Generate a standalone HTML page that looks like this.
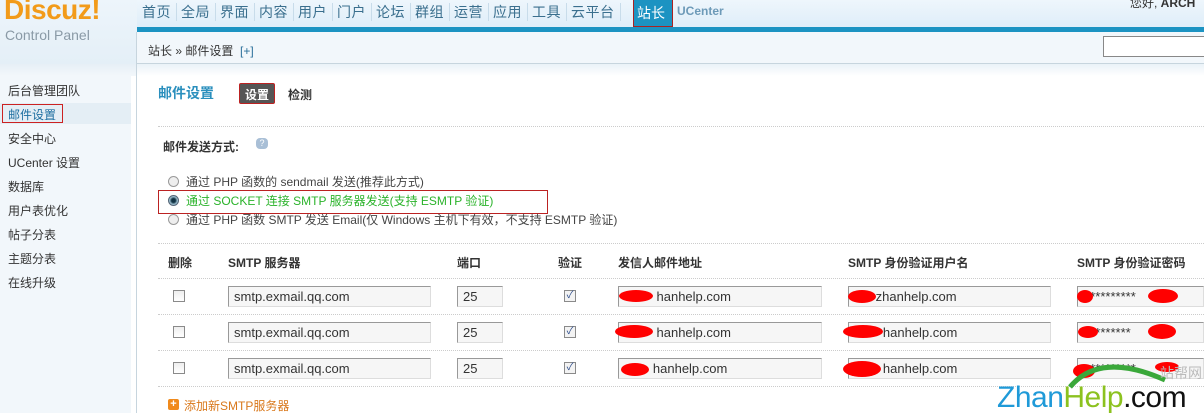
<!DOCTYPE html>
<html><head><meta charset="utf-8"><style>
*{margin:0;padding:0;box-sizing:border-box}
body{width:1204px;height:413px;overflow:hidden;position:relative;background:#fff;font-family:"Liberation Sans","Noto Sans CJK SC",sans-serif;font-size:12px;color:#333}
.a{position:absolute;white-space:nowrap}
.top{left:0;top:0;width:1204px;height:32px;background:linear-gradient(#eef6fc,#dcecf8)}
.bar{left:137px;top:27px;width:1067px;height:5px;background:#1c93c2}
.nav{top:3px;font-size:14px;color:#3a6f8e}
.nav span{display:inline-block;padding:0 5px 0 4px;border-right:1px solid #c8dcea;line-height:18px;letter-spacing:0.5px}
.crumb{left:137px;top:32px;width:1067px;height:32px;background:#f2f7fb;border-bottom:1px solid #c7d5de}
.side{left:0;top:0;width:131px;height:413px;background:#f2f7fb}
.vl{left:136px;top:32px;width:1px;height:381px;background:#c7d5de}
.si{left:8px;font-size:12px;color:#333}
.inp{position:absolute;height:21px;border:1px solid #999;border-right-color:#ddd;border-bottom-color:#ddd;background:#f6f6f6;font-size:13px;padding:2px 5px;color:#333;white-space:nowrap;overflow:hidden}
.cb{position:absolute;width:12px;height:12px;border:1px solid #8a8a8a;background:linear-gradient(#eee,#fff)}
.ck{position:absolute;width:12px;height:12px;border:1px solid #8a8a8a;background:#f3f3f3;font-size:10px;line-height:10px;text-align:center;color:#2a4a8a}
.dot{position:absolute;left:158px;width:1046px;border-top:1px dotted #ccc}
.th{top:254px;font-weight:bold;font-size:12px;color:#333}
.red{position:absolute;background:#f00;border-radius:50%}
</style></head><body>
<div class="a top"></div>
<div class="a side"></div>
<div class="a" style="left:0;top:0;width:137px;height:64px;background:linear-gradient(#edf5fb,#e4eff7)"></div>
<div class="a" style="left:4px;top:-6px;font-size:28px;font-weight:bold;color:#f29b1a;letter-spacing:-0.5px">Discuz!</div>
<div class="a" style="left:5px;top:27px;font-size:14px;color:#8a9aa6">Control Panel</div>
<div class="a nav" style="left:138px"><span>首页</span><span>全局</span><span>界面</span><span>内容</span><span>用户</span><span>门户</span><span>论坛</span><span>群组</span><span>运营</span><span>应用</span><span>工具</span><span>云平台</span></div>
<div class="a" style="left:633px;top:0;width:40px;height:27px;background:#1c93c2;border:1px solid #a22;border-top:none"></div>
<div class="a" style="left:637px;top:3px;font-size:14px;color:#fff">站长</div>
<div class="a" style="left:677px;top:4px;font-size:12px;font-weight:bold;color:#6d9ab8">UCenter</div>
<div class="a" style="left:1130px;top:-6px;font-size:12px;color:#333">您好, <b>ARCH</b></div>
<div class="a bar"></div>
<div class="a crumb"></div>
<div class="a" style="left:148px;top:42px;font-size:12px;color:#333">站长 » 邮件设置 &nbsp;<span style="color:#2a6f9a">[+]</span></div>
<div class="a" style="left:1103px;top:36px;width:102px;height:21px;border:1px solid #888;background:#fff"></div>
<div class="a vl"></div>
<div class="a" style="left:0;top:64px;width:136px;height:12px;background:linear-gradient(#e6eff6,#f2f7fb)"></div>
<div class="a" style="left:137px;top:64px;width:1067px;height:12px;background:linear-gradient(#eaf2f8,#fff)"></div>
<div class="a si" style="top:82px">后台管理团队</div>
<div class="a" style="left:0;top:103px;width:131px;height:21px;background:#e4eef5"></div>
<div class="a" style="left:2px;top:104px;width:61px;height:19px;border:1px solid #c22"></div>
<div class="a si" style="top:106px;color:#1c6ea0">邮件设置</div>
<div class="a si" style="top:130px">安全中心</div>
<div class="a si" style="top:154px">UCenter 设置</div>
<div class="a si" style="top:178px">数据库</div>
<div class="a si" style="top:202px">用户表优化</div>
<div class="a si" style="top:226px">帖子分表</div>
<div class="a si" style="top:250px">主题分表</div>
<div class="a si" style="top:274px">在线升级</div>

<div class="a" style="left:158px;top:83px;font-size:14px;font-weight:bold;color:#2a8fbd">邮件设置</div>
<div class="a" style="left:239px;top:83px;width:36px;height:21px;background:#555;border:1px solid #b22;border-radius:2px"></div>
<div class="a" style="left:245px;top:86px;font-weight:bold;color:#fff">设置</div>
<div class="a" style="left:288px;top:86px;font-weight:bold;color:#333">检测</div>
<div class="dot" style="top:126px"></div>
<div class="a" style="left:163px;top:138px;font-weight:bold">邮件发送方式:</div>
<div class="a" style="left:256px;top:138px;width:12px;height:11px;border-radius:4px;background:#a9bfd6;color:#fff;font-size:9px;text-align:center;line-height:11px">?</div>
<div class="a" style="left:168px;top:176px;width:11px;height:11px;border-radius:50%;border:1px solid #999;background:#eee"></div>
<div class="a" style="left:186px;top:173px;color:#444">通过 PHP 函数的 sendmail 发送(推荐此方式)</div>
<div class="a" style="left:158px;top:190px;width:390px;height:24px;border:1px solid #b22"></div>
<div class="a" style="left:168px;top:195px;width:11px;height:11px;border-radius:50%;border:1px solid #567;background:radial-gradient(#134 30%,#9bc 60%)"></div>
<div class="a" style="left:186px;top:192px;color:#2bb32b">通过 SOCKET 连接 SMTP 服务器发送(支持 ESMTP 验证)</div>
<div class="a" style="left:168px;top:214px;width:11px;height:11px;border-radius:50%;border:1px solid #999;background:#eee"></div>
<div class="a" style="left:186px;top:211px;color:#444">通过 PHP 函数 SMTP 发送 Email(仅 Windows 主机下有效，不支持 ESMTP 验证)</div>
<div class="dot" style="top:243px"></div>
<div class="a th" style="left:168px">删除</div>
<div class="a th" style="left:228px">SMTP 服务器</div>
<div class="a th" style="left:457px">端口</div>
<div class="a th" style="left:558px">验证</div>
<div class="a th" style="left:618px">发信人邮件地址</div>
<div class="a th" style="left:848px">SMTP 身份验证用户名</div>
<div class="a th" style="left:1077px">SMTP 身份验证密码</div>
<div class="dot" style="top:278px"></div>
<div class="dot" style="top:314px"></div>
<div class="dot" style="top:350px"></div>
<div class="dot" style="top:386px"></div>

<div class="cb" style="left:173px;top:290px"></div>
<div class="inp" style="left:228px;top:286px;width:203px">smtp.exmail.qq.com</div>
<div class="inp" style="left:457px;top:286px;width:46px">25</div>
<div class="ck" style="left:564px;top:290px">✓</div>
<div class="inp" style="left:618px;top:286px;width:204px">&nbsp;&nbsp;&nbsp;&nbsp;&nbsp;&nbsp;&nbsp;&nbsp;&nbsp;hanhelp.com</div>
<div class="inp" style="left:848px;top:286px;width:203px">&nbsp;&nbsp;&nbsp;&nbsp;&nbsp;&nbsp;zhanhelp.com</div>
<div class="inp" style="left:1077px;top:286px;width:127px">&nbsp;&nbsp;*********</div>

<div class="cb" style="left:173px;top:326px"></div>
<div class="inp" style="left:228px;top:322px;width:203px">smtp.exmail.qq.com</div>
<div class="inp" style="left:457px;top:322px;width:46px">25</div>
<div class="ck" style="left:564px;top:326px">✓</div>
<div class="inp" style="left:618px;top:322px;width:204px">&nbsp;&nbsp;&nbsp;&nbsp;&nbsp;&nbsp;&nbsp;&nbsp;&nbsp;hanhelp.com</div>
<div class="inp" style="left:848px;top:322px;width:203px">&nbsp;&nbsp;&nbsp;&nbsp;&nbsp;&nbsp;&nbsp;&nbsp;hanhelp.com</div>
<div class="inp" style="left:1077px;top:322px;width:127px">&nbsp;&nbsp;********</div>

<div class="cb" style="left:173px;top:362px"></div>
<div class="inp" style="left:228px;top:358px;width:203px">smtp.exmail.qq.com</div>
<div class="inp" style="left:457px;top:358px;width:46px">25</div>
<div class="ck" style="left:564px;top:362px">✓</div>
<div class="inp" style="left:618px;top:358px;width:204px">&nbsp;&nbsp;&nbsp;&nbsp;&nbsp;&nbsp;&nbsp;&nbsp;hanhelp.com</div>
<div class="inp" style="left:848px;top:358px;width:203px">&nbsp;&nbsp;&nbsp;&nbsp;&nbsp;&nbsp;&nbsp;&nbsp;hanhelp.com</div>
<div class="inp" style="left:1077px;top:358px;width:127px">&nbsp;&nbsp;*********</div>

<div class="red" style="left:619px;top:290px;width:34px;height:12px"></div>
<div class="red" style="left:848px;top:290px;width:28px;height:13px"></div>
<div class="red" style="left:1077px;top:290px;width:16px;height:13px"></div>
<div class="red" style="left:1148px;top:289px;width:30px;height:14px"></div>
<div class="red" style="left:615px;top:325px;width:38px;height:13px"></div>
<div class="red" style="left:843px;top:325px;width:40px;height:13px"></div>
<div class="red" style="left:1078px;top:326px;width:20px;height:12px"></div>
<div class="red" style="left:1148px;top:324px;width:28px;height:15px"></div>
<div class="red" style="left:621px;top:363px;width:28px;height:13px"></div>
<div class="red" style="left:843px;top:361px;width:38px;height:16px"></div>
<div class="red" style="left:1073px;top:364px;width:22px;height:14px"></div>
<div class="red" style="left:1155px;top:362px;width:24px;height:10px"></div>

<div class="a" style="left:168px;top:399px;width:11px;height:11px;background:#f08a1c;border-radius:2px;color:#fff;font-size:11px;line-height:10px;text-align:center;font-weight:bold">+</div>
<div class="a" style="left:184px;top:397px;color:#d9781b">添加新SMTP服务器</div>

<svg class="a" style="left:1060px;top:355px" width="144" height="58"><path d="M10 32 Q40 -4 105 25" stroke="#3aa83a" stroke-width="5" fill="none"/></svg>
<div class="a" style="left:1160px;top:363px;font-size:14px;color:#bbb">站帮网</div>
<div class="a" style="left:997px;top:381px;font-size:30px;font-family:'Liberation Sans',sans-serif;line-height:34px;letter-spacing:-0.5px"><span style="color:#1f9ad8">Zhan</span><span style="color:#8cc21f">Help</span><span style="color:#111">.com</span></div>
</body></html>
